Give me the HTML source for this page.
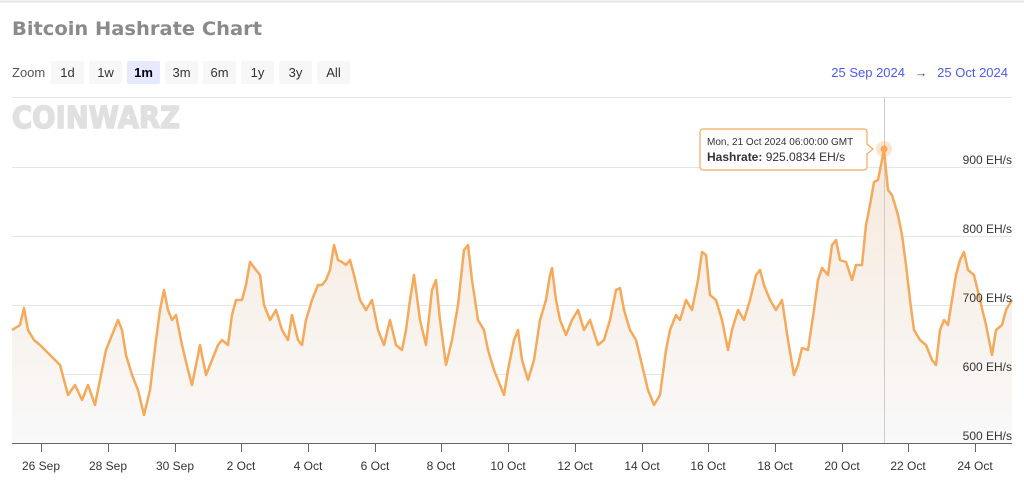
<!DOCTYPE html>
<html><head><meta charset="utf-8"><style>
html,body{margin:0;padding:0;background:#fff;width:1024px;height:491px;overflow:hidden;font-family:"Liberation Sans",Arial,sans-serif;}
</style></head><body>
<svg width="1024" height="491" viewBox="0 0 1024 491" xmlns="http://www.w3.org/2000/svg" style="position:absolute;left:0;top:0">
<defs><linearGradient id="g" x1="0" y1="0" x2="0" y2="1"><stop offset="0" stop-color="#f7e9dc"/><stop offset="1" stop-color="#f9f9f9"/></linearGradient></defs>
<line x1="0" y1="1.5" x2="1024" y2="1.5" stroke="#e6e6e6" stroke-width="2"/>
<text x="12" y="35" font-size="19" font-weight="bold" fill="#8a8a8a" font-family="'DejaVu Sans',sans-serif" textLength="250" lengthAdjust="spacingAndGlyphs">Bitcoin Hashrate Chart</text>
<text x="12" y="77" font-size="13" fill="#555">Zoom</text>
<g font-size="13" fill="#333" text-anchor="middle">
<rect x="51" y="61" width="33" height="23" rx="2" fill="#f7f7f7"/><text x="67.5" y="77">1d</text>
<rect x="89" y="61" width="33" height="23" rx="2" fill="#f7f7f7"/><text x="105.5" y="77">1w</text>
<rect x="127" y="61" width="33" height="23" rx="2" fill="#e6e9ff"/><text x="143.5" y="77" font-weight="bold" fill="#000">1m</text>
<rect x="165" y="61" width="33" height="23" rx="2" fill="#f7f7f7"/><text x="181.5" y="77">3m</text>
<rect x="203" y="61" width="33" height="23" rx="2" fill="#f7f7f7"/><text x="219.5" y="77">6m</text>
<rect x="241" y="61" width="33" height="23" rx="2" fill="#f7f7f7"/><text x="257.5" y="77">1y</text>
<rect x="279" y="61" width="33" height="23" rx="2" fill="#f7f7f7"/><text x="295.5" y="77">3y</text>
<rect x="317" y="61" width="33" height="23" rx="2" fill="#f7f7f7"/><text x="333.5" y="77">All</text>
</g>
<text x="905" y="77" font-size="13" fill="#4a5cf0" text-anchor="end">25 Sep 2024</text>
<text x="921" y="77" font-size="13" fill="#555" text-anchor="middle">→</text>
<text x="1008" y="77" font-size="13" fill="#4a5cf0" text-anchor="end">25 Oct 2024</text>
<g stroke="#e6e6e6" stroke-width="1">
<line x1="12" y1="97.5" x2="1012" y2="97.5"/><line x1="12" y1="167.5" x2="1012" y2="167.5"/><line x1="12" y1="236.5" x2="1012" y2="236.5"/><line x1="12" y1="305.5" x2="1012" y2="305.5"/><line x1="12" y1="374.5" x2="1012" y2="374.5"/>
</g>
<text x="12" y="128" font-size="30" font-weight="900" fill="#e0e0e0" font-family="'DejaVu Sans',sans-serif" textLength="168" lengthAdjust="spacingAndGlyphs" stroke="#e0e0e0" stroke-width="1.5">COINWARZ</text>
<polygon fill="url(#g)" points="12,443 12,330 20,325 24,308 28,330 34,340 40,345 50,355 60,365 68,395 75,385 82,400 88,385 95,405 100,380 106,350 112,335 118,320 122,330 126,355 132,375 138,390 144,415 150,390 156,340 160,310 164,290 168,310 172,320 176,315 182,345 188,370 192,385 196,365 200,345 206,375 212,360 218,345 222,340 228,345 232,315 236,300 242,300 246,285 250,262 256,270 260,275 264,305 270,320 276,310 282,330 288,340 292,315 298,340 302,345 306,320 312,300 318,285 322,285 326,280 330,270 334,245 338,260 342,262 346,265 350,260 354,275 360,300 366,310 372,300 378,330 384,345 390,320 396,345 402,350 406,330 410,300 414,275 420,320 426,345 432,290 436,280 440,320 446,365 452,340 458,305 464,250 468,245 472,280 478,320 484,330 488,350 494,370 500,385 504,395 508,370 514,340 518,330 522,360 528,380 534,360 540,320 546,300 550,275 552,268 556,300 560,320 566,335 572,320 578,310 584,330 590,320 598,345 604,340 610,320 616,290 620,288 624,310 630,330 636,340 642,365 648,390 654,405 660,395 666,350 670,330 676,315 680,320 686,300 692,310 698,280 702,252 706,255 710,295 716,300 722,320 728,350 732,330 738,310 744,320 750,300 756,275 760,270 764,285 770,300 776,310 782,300 788,340 794,375 798,365 802,348 808,350 814,310 818,280 822,268 828,275 832,245 836,240 840,260 846,262 852,280 856,265 862,265 866,225 870,205 874,182 878,180 884,150 888,190 892,195 898,215 902,235 906,265 910,300 914,330 920,340 926,345 932,360 936,365 940,330 944,320 948,325 952,300 956,275 960,260 964,252 968,270 974,275 980,300 986,325 992,355 996,330 1002,325 1006,310 1012,300 1012,443"/>
<line x1="884.5" y1="97" x2="884.5" y2="443" stroke="#cccccc" stroke-width="1"/>
<polyline fill="none" stroke="#f5a95a" stroke-width="2.5" stroke-linejoin="round" points="12,330 20,325 24,308 28,330 34,340 40,345 50,355 60,365 68,395 75,385 82,400 88,385 95,405 100,380 106,350 112,335 118,320 122,330 126,355 132,375 138,390 144,415 150,390 156,340 160,310 164,290 168,310 172,320 176,315 182,345 188,370 192,385 196,365 200,345 206,375 212,360 218,345 222,340 228,345 232,315 236,300 242,300 246,285 250,262 256,270 260,275 264,305 270,320 276,310 282,330 288,340 292,315 298,340 302,345 306,320 312,300 318,285 322,285 326,280 330,270 334,245 338,260 342,262 346,265 350,260 354,275 360,300 366,310 372,300 378,330 384,345 390,320 396,345 402,350 406,330 410,300 414,275 420,320 426,345 432,290 436,280 440,320 446,365 452,340 458,305 464,250 468,245 472,280 478,320 484,330 488,350 494,370 500,385 504,395 508,370 514,340 518,330 522,360 528,380 534,360 540,320 546,300 550,275 552,268 556,300 560,320 566,335 572,320 578,310 584,330 590,320 598,345 604,340 610,320 616,290 620,288 624,310 630,330 636,340 642,365 648,390 654,405 660,395 666,350 670,330 676,315 680,320 686,300 692,310 698,280 702,252 706,255 710,295 716,300 722,320 728,350 732,330 738,310 744,320 750,300 756,275 760,270 764,285 770,300 776,310 782,300 788,340 794,375 798,365 802,348 808,350 814,310 818,280 822,268 828,275 832,245 836,240 840,260 846,262 852,280 856,265 862,265 866,225 870,205 874,182 878,180 884,150 888,190 892,195 898,215 902,235 906,265 910,300 914,330 920,340 926,345 932,360 936,365 940,330 944,320 948,325 952,300 956,275 960,260 964,252 968,270 974,275 980,300 986,325 992,355 996,330 1002,325 1006,310 1012,300"/>
<circle cx="884" cy="149" r="8" fill="#f5a95a" opacity="0.3"/>
<circle cx="884" cy="149" r="3.5" fill="#f5a95a"/>
<g font-size="12" fill="#333" text-anchor="end">
<text x="1012" y="164">900 EH/s</text><text x="1012" y="233">800 EH/s</text><text x="1012" y="302">700 EH/s</text><text x="1012" y="371">600 EH/s</text><text x="1012" y="440">500 EH/s</text>
</g>
<line x1="12" y1="443.5" x2="1012" y2="443.5" stroke="#666" stroke-width="1"/>
<g stroke="#666" stroke-width="1">
<line x1="41.5" y1="443" x2="41.5" y2="452"/><line x1="108.5" y1="443" x2="108.5" y2="452"/><line x1="175.5" y1="443" x2="175.5" y2="452"/><line x1="241.5" y1="443" x2="241.5" y2="452"/><line x1="308.5" y1="443" x2="308.5" y2="452"/><line x1="375.5" y1="443" x2="375.5" y2="452"/><line x1="441.5" y1="443" x2="441.5" y2="452"/><line x1="508.5" y1="443" x2="508.5" y2="452"/><line x1="575.5" y1="443" x2="575.5" y2="452"/><line x1="642.5" y1="443" x2="642.5" y2="452"/><line x1="708.5" y1="443" x2="708.5" y2="452"/><line x1="775.5" y1="443" x2="775.5" y2="452"/><line x1="842.5" y1="443" x2="842.5" y2="452"/><line x1="908.5" y1="443" x2="908.5" y2="452"/><line x1="975.5" y1="443" x2="975.5" y2="452"/>
</g>
<g font-size="12" fill="#333" text-anchor="middle">
<text x="41" y="470">26 Sep</text><text x="108" y="470">28 Sep</text><text x="175" y="470">30 Sep</text><text x="241" y="470">2 Oct</text><text x="308" y="470">4 Oct</text><text x="375" y="470">6 Oct</text><text x="441" y="470">8 Oct</text><text x="508" y="470">10 Oct</text><text x="575" y="470">12 Oct</text><text x="642" y="470">14 Oct</text><text x="708" y="470">16 Oct</text><text x="775" y="470">18 Oct</text><text x="842" y="470">20 Oct</text><text x="908" y="470">22 Oct</text><text x="975" y="470">24 Oct</text>
</g>
<path d="M703,129 H864 a3,3 0 0 1 3,3 V144 L873,149 L867,154 V167 a3,3 0 0 1 -3,3 H703 a3,3 0 0 1 -3,-3 V132 a3,3 0 0 1 3,-3 Z" fill="#fff" stroke="#f5a95a" stroke-width="1.2"/>
<text x="707" y="145" font-size="10" fill="#333">Mon, 21 Oct 2024 06:00:00 GMT</text>
<text x="707" y="161" font-size="12" fill="#333"><tspan font-weight="bold">Hashrate:</tspan> 925.0834 EH/s</text>
</svg>
</body></html>
